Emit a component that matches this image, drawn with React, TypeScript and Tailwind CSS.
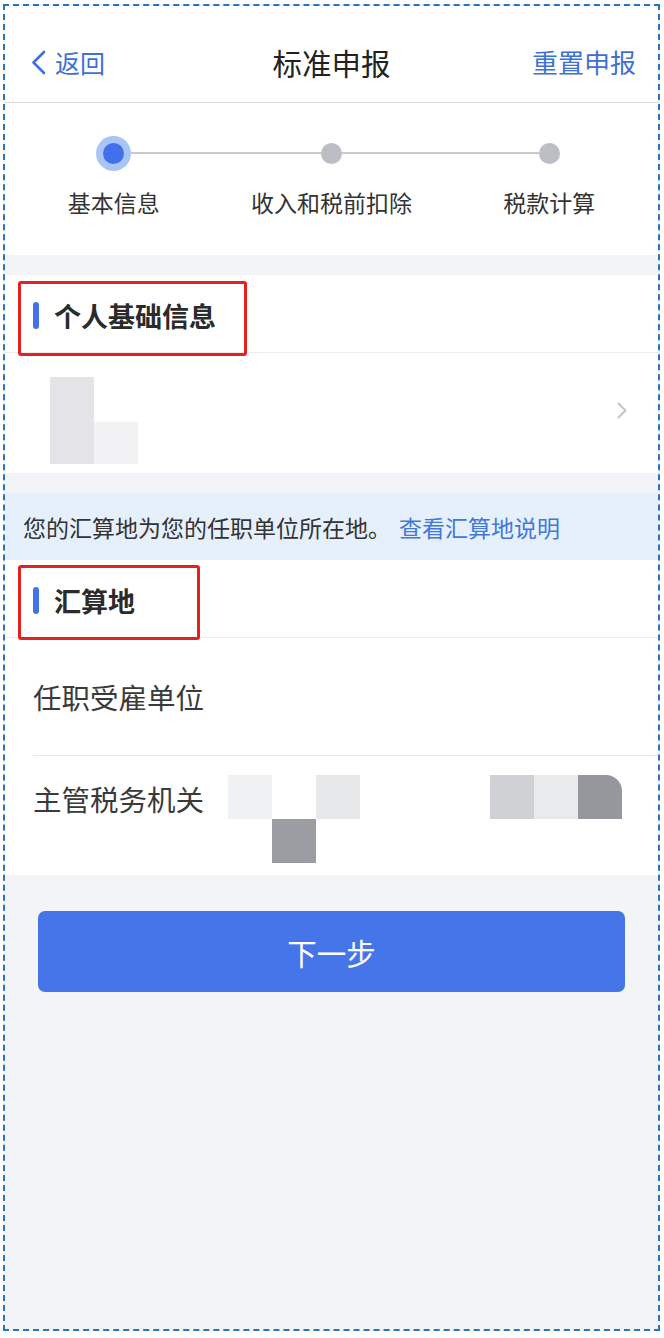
import React from 'react';

const steps = [
  { label: '基本信息', active: true },
  { label: '收入和税前扣除', active: false },
  { label: '税款计算', active: false },
];

// pixelated redaction blocks (each cell 44x44)
const taxOfficeLeft = [
  ['bg-[#f0f1f3]', 'bg-transparent', 'bg-[#e7e8ea]'],
  ['bg-transparent', 'bg-[#9c9da2]', 'bg-transparent'],
];

function SectionTitle({ title, boxWidth, boxTop }: { title: string; boxWidth: string; boxTop: string }) {
  return (
    <div className="relative h-[78px] bg-white border-b border-[#ececef] flex items-center pt-[4px]">
      <div className="ml-[28px] w-[6px] h-[27px] rounded-full bg-[#4373e8]" />
      <span className="ml-[15px] text-[27px] leading-[34px] font-bold text-[#2b2b2b]">{title}</span>
      {/* red annotation frame */}
      <div className={`absolute left-[13px] ${boxTop} h-[75px] ${boxWidth} border-[3px] border-[#e3221f] rounded-[3px]`} />
    </div>
  );
}

export default function App() {
  return (
    <div className="h-[1338px] bg-white pt-[4px] pl-[3px] pr-[4px] pb-[7px] font-['Noto_Sans_CJK_SC','Noto_Sans',sans-serif]">
      <div className="h-full flex flex-col border-2 border-dashed border-[#2a72c2] bg-[#f3f4f8] overflow-hidden">
        {/* nav bar */}
        <div className="h-[97px] shrink-0 bg-white border-b border-[#dcdcdf] pt-[33px]">
          <div className="grid grid-cols-3 items-center h-[46px]">
            <div className="flex items-center pl-[26px] text-[#3f70d8]">
              <svg width="15" height="25" viewBox="0 0 15 25" fill="none">
                <polyline points="13,2 2.5,12.5 13,23" stroke="#3f70d8" strokeWidth="2.6" strokeLinecap="round" strokeLinejoin="round" />
              </svg>
              <span className="ml-[9px] text-[25px] leading-[46px]">返回</span>
            </div>
            <div className="text-center text-[29.5px] leading-[46px] text-[#222]">标准申报</div>
            <div className="text-right pr-[22px] text-[26px] leading-[46px] text-[#3f70d8]">重置申报</div>
          </div>
        </div>

        {/* stepper */}
        <div className="h-[152px] shrink-0 bg-white pt-[32px] grid grid-cols-3">
          {steps.map((s, i) => (
            <div key={s.label} className="flex flex-col items-center">
              <div className="w-full h-[36px] flex items-center">
                <div className={`flex-1 h-[2px] ${i === 0 ? 'bg-transparent' : 'bg-[#c9c9cd]'}`} />
                {s.active ? (
                  <div className="w-[35px] h-[35px] rounded-full bg-[#a9c5f6] flex items-center justify-center">
                    <div className="w-[21px] h-[21px] rounded-full bg-[#4270ea]" />
                  </div>
                ) : (
                  <div className="w-[21px] h-[21px] rounded-full bg-[#bdbec5]" />
                )}
                <div className={`flex-1 h-[2px] ${i === steps.length - 1 ? 'bg-transparent' : 'bg-[#c9c9cd]'}`} />
              </div>
              <div className="mt-[15px] text-[23px] leading-[32px] text-[#333]">{s.label}</div>
            </div>
          ))}
        </div>

        {/* personal info */}
        <div className="mt-[20px] shrink-0">
          <SectionTitle title="个人基础信息" boxWidth="w-[229px]" boxTop="top-[6px]" />
          <div className="h-[120px] bg-white flex items-start pl-[45px] pr-[31px] pt-[24px]">
            <div className="flex items-end">
              <div className="w-[44px] h-[87px] bg-[#e4e4e6]" />
              <div className="w-[44px] h-[42px] bg-[#f2f2f4]" />
            </div>
            <div className="flex-1" />
            <svg className="mt-[25px]" width="10" height="17" viewBox="0 0 10 17" fill="none">
              <polyline points="1.5,1.5 8.5,8.5 1.5,15.5" stroke="#c5c5c9" strokeWidth="2" strokeLinecap="round" strokeLinejoin="round" />
            </svg>
          </div>
        </div>

        {/* notice */}
        <div className="mt-[20px] h-[67px] shrink-0 bg-[#e6f0fc] flex items-center pl-[18px] text-[23px] leading-[30px]">
          <span className="text-[#333]">您的汇算地为您的任职单位所在地。</span>
          <span className="ml-[8px] text-[#4178dc]">查看汇算地说明</span>
        </div>

        {/* settlement place */}
        <div className="shrink-0 bg-white">
          <SectionTitle title="汇算地" boxWidth="w-[182px]" boxTop="top-[5px]" />
          <div className="ml-[28px] h-[118px] border-b border-[#e9e9ec] flex items-center">
            <span className="text-[28.5px] leading-[36px] text-[#3a3a3a]">任职受雇单位</span>
          </div>
          <div className="h-[119px] flex items-start pl-[28px] pr-[36px] pt-[19px]">
            <span className="text-[28.5px] leading-[48px] text-[#3a3a3a]">主管税务机关</span>
            <div className="ml-[24px] flex-1 flex justify-between">
              <div className="flex flex-col">
                {taxOfficeLeft.map((row, r) => (
                  <div key={r} className="flex">
                    {row.map((c, k) => (
                      <div key={k} className={`w-[44px] h-[44px] ${c}`} />
                    ))}
                  </div>
                ))}
              </div>
              <div className="flex h-[44px]">
                <div className="w-[44px] h-[44px] bg-[#d0d1d4]" />
                <div className="w-[44px] h-[44px] bg-[#e9eaec]" />
                <div className="w-[44px] h-[44px] bg-[#96979d] rounded-tr-[16px]" />
              </div>
            </div>
          </div>
        </div>

        {/* next button */}
        <div className="mt-[36px] mx-[33px] h-[81px] shrink-0 rounded-[7px] bg-[#4675ea] flex items-center justify-center">
          <span className="text-[29.5px] leading-[40px] text-white">下一步</span>
        </div>

        <div className="flex-1" />
      </div>
    </div>
  );
}
